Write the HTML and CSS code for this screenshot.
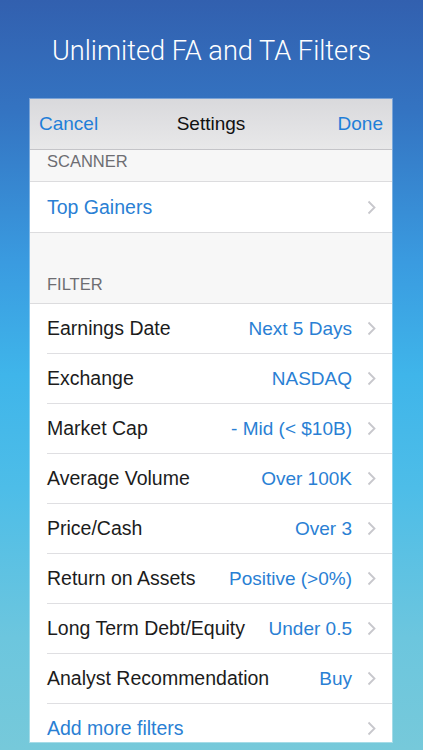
FILE: index.html
```html
<!DOCTYPE html>
<html>
<head>
<meta charset="utf-8">
<link rel="stylesheet" href="styles.css">
</head>
<body>
<div class="screen">
  <h1 class="headline">Unlimited FA and TA Filters</h1>
  <div class="panel">
    <div class="navbar">
      <span class="nav-btn left">Cancel</span>
      <span class="nav-title">Settings</span>
      <span class="nav-btn right">Done</span>
    </div>
    <div class="section-head first">SCANNER</div>
    <div class="group single">
      <div class="row link full"><span class="label">Top Gainers</span><span class="chev"><svg width="9" height="15" viewBox="0 0 9 15"><path d="M1.5 1.5 L7.5 7.5 L1.5 13.5" fill="none" stroke="#c7c7cc" stroke-width="1.8"/></svg></span></div>
    </div>
    <div class="section-head tall">FILTER</div>
    <div class="group">
      <div class="row"><span class="label">Earnings Date</span><span class="value">Next 5 Days</span><span class="chev"><svg width="9" height="15" viewBox="0 0 9 15"><path d="M1.5 1.5 L7.5 7.5 L1.5 13.5" fill="none" stroke="#c7c7cc" stroke-width="1.8"/></svg></span></div>
      <div class="row"><span class="label">Exchange</span><span class="value">NASDAQ</span><span class="chev"><svg width="9" height="15" viewBox="0 0 9 15"><path d="M1.5 1.5 L7.5 7.5 L1.5 13.5" fill="none" stroke="#c7c7cc" stroke-width="1.8"/></svg></span></div>
      <div class="row"><span class="label">Market Cap</span><span class="value">- Mid (&lt; $10B)</span><span class="chev"><svg width="9" height="15" viewBox="0 0 9 15"><path d="M1.5 1.5 L7.5 7.5 L1.5 13.5" fill="none" stroke="#c7c7cc" stroke-width="1.8"/></svg></span></div>
      <div class="row"><span class="label">Average Volume</span><span class="value">Over 100K</span><span class="chev"><svg width="9" height="15" viewBox="0 0 9 15"><path d="M1.5 1.5 L7.5 7.5 L1.5 13.5" fill="none" stroke="#c7c7cc" stroke-width="1.8"/></svg></span></div>
      <div class="row"><span class="label">Price/Cash</span><span class="value">Over 3</span><span class="chev"><svg width="9" height="15" viewBox="0 0 9 15"><path d="M1.5 1.5 L7.5 7.5 L1.5 13.5" fill="none" stroke="#c7c7cc" stroke-width="1.8"/></svg></span></div>
      <div class="row"><span class="label">Return on Assets</span><span class="value">Positive (&gt;0%)</span><span class="chev"><svg width="9" height="15" viewBox="0 0 9 15"><path d="M1.5 1.5 L7.5 7.5 L1.5 13.5" fill="none" stroke="#c7c7cc" stroke-width="1.8"/></svg></span></div>
      <div class="row"><span class="label">Long Term Debt/Equity</span><span class="value">Under 0.5</span><span class="chev"><svg width="9" height="15" viewBox="0 0 9 15"><path d="M1.5 1.5 L7.5 7.5 L1.5 13.5" fill="none" stroke="#c7c7cc" stroke-width="1.8"/></svg></span></div>
      <div class="row"><span class="label">Analyst Recommendation</span><span class="value">Buy</span><span class="chev"><svg width="9" height="15" viewBox="0 0 9 15"><path d="M1.5 1.5 L7.5 7.5 L1.5 13.5" fill="none" stroke="#c7c7cc" stroke-width="1.8"/></svg></span></div>
      <div class="row link"><span class="label">Add more filters</span><span class="chev"><svg width="9" height="15" viewBox="0 0 9 15"><path d="M1.5 1.5 L7.5 7.5 L1.5 13.5" fill="none" stroke="#c7c7cc" stroke-width="1.8"/></svg></span></div>
    </div>
  </div>
</div>
</body>
</html>
```
FILE: styles.css
```css
html, body {
  margin: 0;
  padding: 0;
}
body {
  width: 423px;
  height: 750px;
  overflow: hidden;
  font-family: "Liberation Sans", Arial, sans-serif;
}
.screen {
  width: 423px;
  height: 750px;
  background: linear-gradient(180deg, #3260af 0%, #3474c2 15%, #3a9be0 35%, #3fb5ea 50%, #4dbde8 65%, #6cc6de 85%, #76c9da 100%);
  display: flex;
  flex-direction: column;
  align-items: flex-start;
  overflow: hidden;
}
.headline {
  margin: 35px 0 0 0;
  width: 423px;
  text-align: center;
  font-family: Roboto, "Liberation Sans", sans-serif;
  font-weight: 300;
  font-size: 27.2px;
  line-height: 32px;
  color: #fff;
}
.panel {
  margin: 32px 0 0 30px;
  width: 362px;
  height: 643px;
  background: #f7f7f7;
  box-shadow: 0 0 0 1px rgba(255,255,255,0.35);
  display: flex;
  flex-direction: column;
  overflow: hidden;
}
.navbar {
  height: 50px;
  flex: none;
  display: grid;
  grid-template-columns: 1fr auto 1fr;
  align-items: center;
  padding: 0 9px;
  background: linear-gradient(180deg, #d9d9dc 0%, #e2e2e4 60%, #e8e8e9 100%);
  border-bottom: 1px solid #c4c4c8;
  font-size: 19px;
}
.nav-btn { color: #1f7ed8; }
.nav-btn.right { justify-self: end; }
.nav-title { color: #111; }
.section-head {
  flex: none;
  padding-left: 17px;
  color: #6d6d72;
  font-size: 16.5px;
  box-sizing: border-box;
  border-bottom: 1px solid #dcdcde;
  display: flex;
  align-items: flex-end;
}
.section-head.first {
  height: 32px;
  padding-bottom: 10px;
}
.section-head.tall {
  height: 71px;
  padding-bottom: 9px;
}
.group {
  background: #fff;
  flex: none;
}
.group.single {
  border-bottom: 1px solid #dcdcde;
}
.row {
  height: 50px;
  box-sizing: border-box;
  display: flex;
  align-items: center;
  margin-left: 17px;
  padding-right: 16px;
  border-bottom: 1px solid #dfdfe2;
  font-size: 19.5px;
  color: #1c1c1c;
}
.row.full {
  margin-left: 0;
  padding-left: 17px;
  border-bottom: none;
  height: 50px;
}
.label { flex: 1; white-space: nowrap; }
.row.link .label { color: #2a7fd4; }
.value {
  color: #2a7fd4;
  font-size: 19px;
  margin-right: 15px;
  white-space: nowrap;
}
.chev {
  display: flex;
  align-items: center;
  width: 9px;
}
```
